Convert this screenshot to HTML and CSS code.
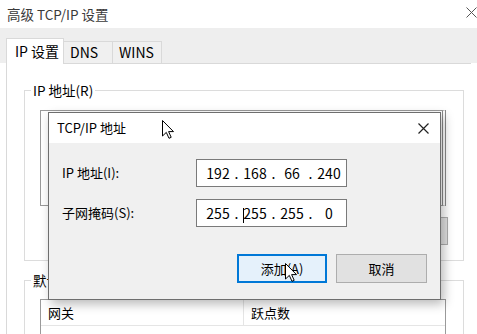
FILE: index.html
```html
<!DOCTYPE html>
<html lang="zh-CN">
<head>
<meta charset="utf-8">
<title>高级 TCP/IP 设置</title>
<link rel="stylesheet" href="styles.css">
</head>
<body>
<div class="win">
  <div class="titlebar">
    <span class="title">高级 TCP/IP 设置</span>
    <svg class="x-main" viewBox="0 0 11 11" width="11" height="11"><path d="M0.5 0.5 L10.5 10.5 M10.5 0.5 L0.5 10.5" stroke="#555" stroke-width="1" fill="none"/></svg>
  </div>
  <div class="tabstrip">
    <div class="tab sel">IP 设置</div>
    <div class="tab">DNS</div>
    <div class="tab">WINS</div>
  </div>
  <div class="panel">
    <fieldset class="group g1">
      <legend>IP 地址(R)</legend>
      <div class="list"></div>
      <div class="btnrow">
        <div class="bbtn"></div>
        <div class="bbtn"></div>
        <div class="bbtn"></div>
      </div>
    </fieldset>
    <fieldset class="group g2">
      <legend>默认网关(F):</legend>
      <div class="list list2">
        <div class="hdr">
          <div class="col c1">网关</div>
          <div class="col c2">跃点数</div>
        </div>
      </div>
    </fieldset>
  </div>

  <div class="dialog">
    <div class="dlg-title">
      <span>TCP/IP 地址</span>
      <svg class="x-dlg" viewBox="0 0 11 11" width="11" height="11"><path d="M0.5 0.5 L10.5 10.5 M10.5 0.5 L0.5 10.5" stroke="#222" stroke-width="1.2" fill="none"/></svg>
    </div>
    <div class="dlg-body">
      <div class="row">
        <div class="lbl">IP 地址(I):</div>
        <div class="ipbox">
          <span class="oct">192</span><span class="dot">.</span><span class="oct">168</span><span class="dot">.</span><span class="oct">66</span><span class="dot">.</span><span class="oct">240</span>
        </div>
      </div>
      <div class="row">
        <div class="lbl">子网掩码(S):</div>
        <div class="ipbox">
          <span class="oct">255</span><span class="dot">.</span><span class="oct"><i class="caret"></i>255</span><span class="dot">.</span><span class="oct">255</span><span class="dot">.</span><span class="oct">0</span>
        </div>
      </div>
      <div class="btns">
        <div class="btn primary">添加(A)</div>
        <div class="btn">取消</div>
      </div>
    </div>
  </div>

  <svg class="cursor cur-a" viewBox="0 0 12 19" width="12" height="19"><path d="M0.5 0.5 V16 L4.3 12.4 L7 18.3 L9.2 17.3 L6.6 11.6 H11.5 Z" fill="#fff" stroke="#000" stroke-width="1" stroke-linejoin="round"/></svg>
  <svg class="cursor cur-b" viewBox="0 0 12 19" width="12" height="19"><path d="M0.5 0.5 V16 L4.3 12.4 L7 18.3 L9.2 17.3 L6.6 11.6 H11.5 Z" fill="#fff" stroke="#000" stroke-width="1" stroke-linejoin="round"/></svg>
</div>
</body>
</html>
```

FILE: styles.css
```css
* { box-sizing: border-box; }
html, body { margin: 0; padding: 0; }
body {
  width: 477px;
  height: 334px;
  overflow: hidden;
  background: #fff;
  font-family: "Noto Sans CJK SC", "Noto Sans", sans-serif;
  color: #000;
}
.win {
  position: relative;
  width: 477px;
  height: 334px;
  overflow: hidden;
  background: #fff;
}
.titlebar {
  height: 28px;
  display: flex;
  align-items: center;
  justify-content: space-between;
  padding-left: 7px;
  background: #fff;
}
.title {
  font-size: 13.5px;
  color: #3a3a3a;
  line-height: 18px;
}
.x-main { margin-right: 0; margin-top: -4px; }

.tabstrip {
  height: 35px;
  background: #eeeeee;
  display: flex;
  align-items: flex-end;
  padding-left: 6px;
  position: relative;
  z-index: 1;
}
.tab {
  height: 22px;
  width: 50px;
  border: 1px solid #d9d9d9;
  border-bottom: none;
  background: #f0f0f0;
  font-size: 14px;
  line-height: 20px;
  padding-left: 6px;
  margin-left: -1px;
}
.tab.sel {
  width: 58px;
  height: 26px;
  margin-left: 0;
  margin-bottom: -1px;
  background: #fff;
  line-height: 24px;
  padding-left: 8px;
  position: relative;
  z-index: 2;
}
.tab + .tab { padding-left: 6px; }
.tab.sel + .tab { margin-left: -1px; }

.panel {
  margin-left: 6px;
  width: 465px;
  height: 271px;
  border-top: 1px solid #d9d9d9;
  border-left: 1px solid #d9d9d9;
  background: #fff;
  padding: 17px 0 0 17px;
}
.group {
  margin: 0;
  width: 440px;
  border: 1px solid #dcdcdc;
  padding: 0 17px 15px 15px;
  min-width: 0;
}
.group legend {
  font-size: 13.5px;
  line-height: 18px;
  padding: 0 2px;
  margin-left: -9px;
  color: #000;
}
.list {
  margin-top: 11px;
  height: 96px;
  border: 1px solid #9a9a9a;
  border-right: 4px double #8a8a8a;
  background: #fff;
}
.btnrow {
  margin-top: 11px;
  height: 28px;
  display: flex;
  justify-content: flex-end;
  gap: 8px;
  margin-right: -2px;
}
.bbtn {
  width: 75px;
  height: 28px;
  border: 1px solid #adadad;
  background: #e1e1e1;
}
.g2 { margin-top: 10px; padding-bottom: 0; }
.list2 {
  margin-top: 10px;
  height: 80px;
  border-right: 1px solid #9a9a9a;
}
.hdr {
  display: flex;
  height: 26px;
  border-bottom: 1px solid #e5e5e5;
}
.col {
  font-size: 13px;
  line-height: 26px;
  padding-left: 7px;
}
.c1 { width: 203px; border-right: 1px solid #e5e5e5; }

/* dialog overlay */
.dialog {
  position: absolute;
  left: 48px;
  top: 112px;
  width: 393px;
  height: 188px;
  border: 1px solid #6e6e6e;
  background: #f0f0f0;
  box-shadow: 3px 4px 10px rgba(0, 0, 0, 0.28);
  display: flex;
  flex-direction: column;
  z-index: 5;
}
.dlg-title {
  height: 30px;
  flex: none;
  background: #fff;
  display: flex;
  align-items: center;
  justify-content: space-between;
  padding: 0 11px 0 8px;
  font-size: 13px;
}
.dlg-title span { line-height: 18px; }
.dlg-body {
  flex: 1;
  background: #f0f0f0;
  padding: 16px 13px 16px 13px;
  display: flex;
  flex-direction: column;
}
.row {
  display: flex;
  align-items: center;
  height: 28px;
  flex: none;
}
.row + .row { margin-top: 12px; }
.lbl {
  width: 134px;
  font-size: 13px;
  line-height: 18px;
}
.ipbox {
  width: 151px;
  height: 28px;
  border: 1px solid #7a7a7a;
  background: #fff;
  display: flex;
  align-items: center;
  padding-left: 6px;
  font-size: 14px;
  line-height: 18px;
}
.oct { width: 30px; height: 18px; text-align: center; white-space: nowrap; }
.dot { width: 7px; height: 18px; text-align: center; }
.caret {
  display: inline-block;
  width: 1px;
  height: 15px;
  background: #000;
  vertical-align: middle;
  margin-right: -1px;
}
.btns {
  margin-top: 27px;
  display: flex;
  justify-content: flex-end;
  gap: 9px;
}
.btn {
  width: 91px;
  height: 29px;
  border: 1px solid #adadad;
  background: #e1e1e1;
  font-size: 13px;
  line-height: 27px;
  text-align: center;
}
.btn.primary {
  width: 90px;
  border-color: #0078d7;
  box-shadow: inset 0 0 0 1px #0078d7;
  background: #e5f1fb;
}

.cursor { position: absolute; z-index: 10; }
.cur-a { left: 162px; top: 120px; }
.cur-b { left: 285px; top: 263px; }
```
